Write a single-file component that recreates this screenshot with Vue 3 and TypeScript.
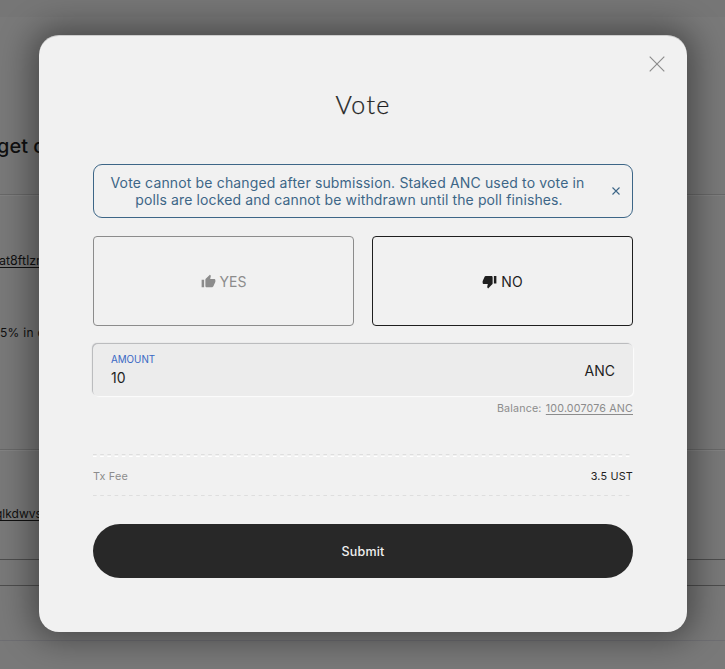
<script setup lang="ts">
import { ref } from 'vue'

type Choice = 'yes' | 'no'

const choice = ref<Choice>('no')
const amount = ref('10')
const thumb =
  'M1 21h4V9H1v12zm22-11c0-1.1-.9-2-2-2h-6.31l.95-4.57.03-.32c0-.41-.17-.79-.44-1.06L14.17 1 7.59 7.59C7.22 7.95 7 8.45 7 9v10c0 1.1.9 2 2 2h9c.83 0 1.54-.5 1.84-1.22l3.02-7.05c.09-.23.14-.47.14-.73v-2z'
</script>

<template>
  <div class="screen">
    <div class="page">
      <section class="poll">
        <h2>get d</h2>
      </section>
      <section class="details">
        <a class="address">at8ftlzr</a>
        <p class="summary">5% in d</p>
      </section>
      <section class="contract">
        <a class="creator">qlkdwvs</a>
        <div class="frame"></div>
      </section>
    </div>

    <div class="overlay">
      <div class="dialog" role="dialog">
        <svg class="close" viewBox="0 0 16 16"><path d="M.7 .7 15.3 15.3M15.3 .7 .7 15.3" /></svg>
        <h1>Vote</h1>

        <div class="notice">
          <p>
            <span>Vote cannot be changed after submission. Staked ANC used to vote in</span><br />
            <span class="second">polls are locked and cannot be withdrawn until the poll finishes.</span>
          </p>
          <svg class="dismiss" viewBox="0 0 8 8"><path d="M.5 .5 7.5 7.5M7.5 .5 .5 7.5" /></svg>
        </div>

        <div class="choices">
          <button :class="{ selected: choice === 'yes' }" @click="choice = 'yes'">
            <svg viewBox="0 0 24 24"><path :d="thumb" /></svg><span>YES</span>
          </button>
          <button :class="{ selected: choice === 'no' }" @click="choice = 'no'">
            <svg class="down" viewBox="0 0 24 24"><path :d="thumb" /></svg><span>NO</span>
          </button>
        </div>

        <label class="field">
          <span class="entry">
            <span class="caption">AMOUNT</span>
            <input v-model="amount" />
          </span>
          <span class="unit">ANC</span>
        </label>
        <div class="balance"><span>Balance:</span> <a>100.007076 ANC</a></div>

        <div class="fee">
          <svg class="rule" viewBox="0 0 540 4"><path d="M0 .5H540" /><path class="light" d="M0 2.5H540" /></svg>
          <div class="fee-row"><span>Tx Fee</span><b>3.5 UST</b></div>
          <svg class="rule" viewBox="0 0 540 4"><path d="M0 .5H540" /></svg>
        </div>

        <button class="submit">Submit</button>
      </div>
    </div>
  </div>
</template>

<style>
body {
  overflow: hidden;
}
</style>

<style scoped>
* {
  box-sizing: border-box;
}

.screen {
  display: grid;
  width: 725px;
  height: 669px;
  overflow: hidden;
  background: #797979;
  font-family: Inter, "Liberation Sans", sans-serif;
}

.page,
.overlay {
  grid-area: 1 / 1;
  min-width: 0;
}

h1, h2, p {
  margin: 0;
}

.page {
  height: 641px;
  padding-top: 17px;
  overflow: hidden;
  color: #101010;
  background: linear-gradient(#767676 17px, #797979 17px);
  border-bottom: 1px solid #6e6e72;
  white-space: nowrap;
}

.poll {
  height: 178px;
  padding-top: 115px;
  border-bottom: 1px solid #686868;
  box-shadow: 0 1px #808080;
}

h2 {
  margin-left: -3px;
  font-size: 20px;
  line-height: 28px;
  font-weight: 500;
}

.details {
  height: 255px;
  padding-top: 57px;
  border-bottom: 1px solid #686868;
  box-shadow: 0 1px #828282;
  font-size: 12.5px;
}

.address,
.creator {
  display: block;
  line-height: 18px;
  text-decoration: underline;
  text-underline-offset: 2px;
}

.address {
  margin-left: -1px;
}

.summary {
  margin-top: 54px;
  font-size: 12px;
  line-height: 18px;
  letter-spacing: .3px;
}

.contract {
  padding-top: 55px;
  font-size: 12px;
}

.creator {
  margin-left: -5px;
}

.frame {
  height: 27px;
  margin-top: 36px;
  border-top: 1px solid #4d4d4d;
  border-bottom: 1px solid #4d4d4d;
}

.overlay {
  display: flex;
  justify-content: center;
  align-items: flex-start;
  padding: 35px 38px 0 39px;
}

.dialog {
  position: relative;
  width: 648px;
  height: 597px;
  padding: 53px 54px 0;
  border-radius: 20px;
  background: #f1f1f1;
  box-shadow: 0 0 33px 8px rgba(0, 0, 0, .4), inset 0 1px rgba(0, 0, 0, .15);
  color: #1f1f1f;
}

.close {
  position: absolute;
  top: 21px;
  right: 22px;
  width: 16px;
  height: 16px;
  fill: none;
  stroke: #8c8c8c;
  stroke-width: 1.15;
}

h1 {
  height: 34px;
  font-family: Lato, Inter, sans-serif;
  font-size: 25px;
  font-weight: 300;
  line-height: 33px;
  letter-spacing: 1.3px;
  text-align: center;
  -webkit-text-stroke: .25px currentColor;
}

.notice {
  display: flex;
  align-items: center;
  justify-content: space-between;
  height: 54px;
  margin-top: 42px;
  padding: 0 12px 0 16px;
  border: 1px solid #3d6687;
  border-radius: 9px;
  color: #3d6687;
  font-size: 14px;
  line-height: 17px;
  text-align: center;
  white-space: nowrap;
}

.notice p {
  width: 475px;
  letter-spacing: .15px;
}

.notice .second {
  padding-left: 3px;
  letter-spacing: .12px;
}

.dismiss {
  width: 8px;
  height: 8px;
  margin-top: -1px;
  fill: none;
  stroke: #3d6687;
  stroke-width: 1.1;
}

.choices {
  display: grid;
  grid-template-columns: 1fr 1fr;
  gap: 18px;
  height: 90px;
  margin-top: 18px;
}

button {
  font-family: inherit;
}

.choices button {
  display: flex;
  align-items: center;
  justify-content: center;
  gap: 4px;
  padding: 1px 0 0;
  border: 1px solid #8c8c8c;
  border-radius: 4px;
  background: transparent;
  color: #8c8c8c;
  font-size: 14px;
}

.choices button.selected {
  border-color: #1f1f1f;
  color: #1f1f1f;
}

.choices svg {
  width: 15px;
  height: 15px;
  margin-top: -1px;
  fill: currentColor;
}

.choices .down {
  transform: rotate(180deg);
}

.field {
  display: flex;
  align-items: center;
  justify-content: space-between;
  height: 52px;
  margin-top: 18px;
  padding: 1px 18px 0;
  border-radius: 5px;
  background: #ececec;
  box-shadow: -1px -1px 1px #b5b6b9, 1px 1px 1px #fcfcfc;
}

.entry {
  display: flex;
  flex-direction: column;
}

.caption {
  color: #3867c4;
  font-size: 9.8px;
  line-height: 12px;
}

input {
  width: 200px;
  height: 20px;
  margin-top: 1px;
  padding: 0;
  border: 0;
  outline: 0;
  background: none;
  color: #1f1f1f;
  font: 14px Inter, sans-serif;
}

.unit {
  font-size: 14px;
}

.balance {
  height: 16px;
  margin-top: 5px;
  color: #8c8c8c;
  font-size: 10.7px;
  line-height: 16px;
  letter-spacing: .17px;
  text-align: right;
}

.balance a {
  margin-left: 1px;
  text-decoration: underline;
  text-underline-offset: 2px;
}

.fee {
  margin-top: 37px;
}

.rule {
  display: block;
  width: 540px;
  height: 4px;
  fill: none;
  stroke: #dedede;
  stroke-width: 1;
  stroke-dasharray: 3.6 3.6;
}

.rule .light {
  stroke: #fff;
}

.fee-row {
  display: flex;
  align-items: center;
  justify-content: space-between;
  height: 37px;
  padding-bottom: 1px;
  font-size: 10.8px;
  letter-spacing: .2px;
}

.fee-row span {
  color: #8c8c8c;
}

.fee-row b {
  font-weight: 400;
}

.submit {
  display: block;
  width: 100%;
  height: 54px;
  margin-top: 25px;
  padding: 1px 0 0;
  border: 0;
  border-radius: 27px;
  background: #282828;
  color: #f1f1f1;
  font-size: 12.5px;
  font-weight: 500;
  letter-spacing: .2px;
}
</style>
